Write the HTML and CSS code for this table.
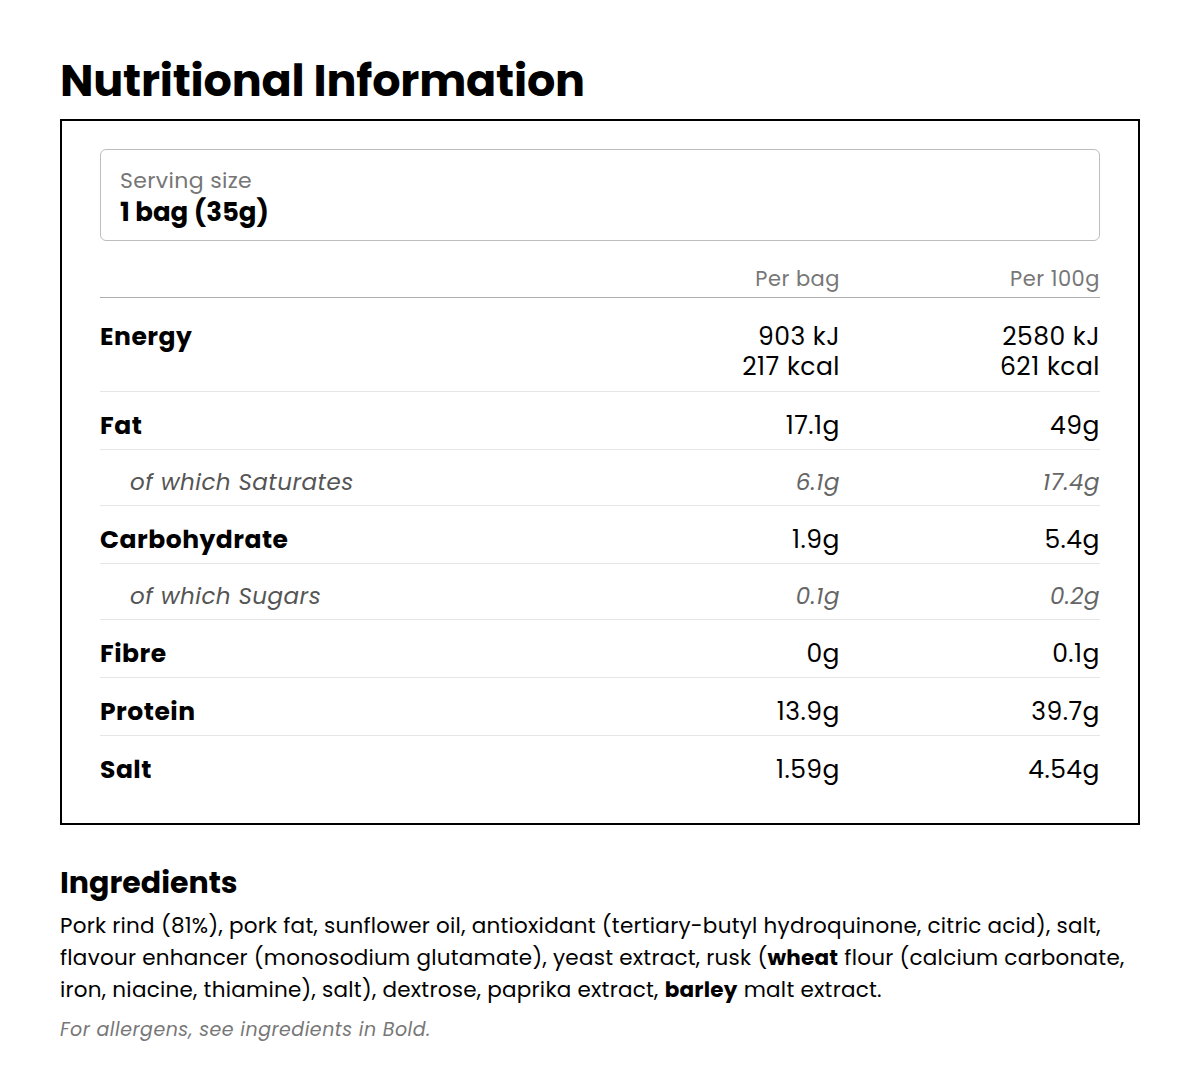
FILE: index.html
```html
<!DOCTYPE html>
<html lang="en">
<head>
<meta charset="utf-8">
<title>Nutritional Information</title>
<link rel="stylesheet" href="styles.css">
</head>
<body>
<main class="page">
  <h1 class="title">Nutritional Information</h1>
  <section class="panel">
    <div class="serving">
      <div class="serving-label">Serving size</div>
      <div class="serving-value">1 bag (35g)</div>
    </div>
    <div class="table">
      <div class="row head">
        <span class="label"></span>
        <span class="val">Per bag</span>
        <span class="val">Per 100g</span>
      </div>
      <div class="row first">
        <span class="label">Energy</span>
        <span class="val">903 kJ<br>217 kcal</span>
        <span class="val">2580 kJ<br>621 kcal</span>
      </div>
      <div class="row">
        <span class="label">Fat</span>
        <span class="val">17.1g</span>
        <span class="val">49g</span>
      </div>
      <div class="row sub">
        <span class="label">of which Saturates</span>
        <span class="val">6.1g</span>
        <span class="val">17.4g</span>
      </div>
      <div class="row">
        <span class="label">Carbohydrate</span>
        <span class="val">1.9g</span>
        <span class="val">5.4g</span>
      </div>
      <div class="row sub">
        <span class="label">of which Sugars</span>
        <span class="val">0.1g</span>
        <span class="val">0.2g</span>
      </div>
      <div class="row">
        <span class="label">Fibre</span>
        <span class="val">0g</span>
        <span class="val">0.1g</span>
      </div>
      <div class="row">
        <span class="label">Protein</span>
        <span class="val">13.9g</span>
        <span class="val">39.7g</span>
      </div>
      <div class="row last">
        <span class="label">Salt</span>
        <span class="val">1.59g</span>
        <span class="val">4.54g</span>
      </div>
    </div>
  </section>
  <section class="ingredients">
    <h2 class="ing-title">Ingredients</h2>
    <p class="ing-text">Pork rind (81%), pork fat, sunflower oil, antioxidant (tertiary-butyl hydroquinone, citric acid), salt, flavour enhancer (monosodium glutamate), yeast extract, rusk (<b>wheat</b> flour (calcium carbonate, iron, niacine, thiamine), salt), dextrose, paprika extract, <b>barley</b> malt extract.</p>
    <p class="ing-note">For allergens, see ingredients in Bold.</p>
  </section>
</main>
</body>
</html>
```

FILE: styles.css
```css
* { box-sizing: border-box; }
html, body { margin: 0; padding: 0; background: #fff; }
body {
  font-family: "Poppins", Inter, "Noto Sans", sans-serif;
  color: #000;
}
.page {
  padding: 53px 60px 40px;
}
.title {
  margin: 0 0 10px;
  font-size: 44.5px;
  line-height: 56px;
  font-weight: 700;
  letter-spacing: -0.2px;
}
.panel {
  border: 2px solid #000;
  padding: 28px 38px 30px;
}
.serving {
  border: 1px solid #bdbdbd;
  border-radius: 6px;
  padding: 16px 19px 11px;
}
.serving-label {
  font-size: 22px;
  line-height: 29px;
  letter-spacing: 0.35px;
  color: #767676;
}
.serving-value {
  font-size: 26px;
  line-height: 34px;
  font-weight: 700;
}
.table {
  margin-top: 24px;
}
.row {
  display: grid;
  grid-template-columns: 1fr 260px 260px;
  padding: 19px 0 8px;
  border-bottom: 1px solid #e6e6e6;
  font-size: 25px;
  line-height: 30px;
  letter-spacing: 0.5px;
}
.row .label { font-weight: 700; }
.row .val { text-align: right; }
.row.head {
  padding: 0 0 4px;
  border-bottom-color: #adadad;
  font-size: 21px;
  line-height: 28px;
  letter-spacing: 0.5px;
  color: #777;
}
.row.first { padding: 24px 0 9px; }
.row.sub {
  padding: 18px 0 9px;
  font-style: italic;
  font-size: 23px;
  line-height: 28px;
  letter-spacing: 0.5px;
  color: #666;
}
.row.sub .label {
  font-weight: 400;
  padding-left: 30px;
  color: #555;
}
.row.last { border-bottom: none; }
.ingredients {
  margin-top: 40px;
}
.ing-title {
  margin: 0;
  font-size: 30px;
  line-height: 36px;
  font-weight: 700;
}
.ing-text {
  margin: 9px 0 0;
  font-size: 21.5px;
  line-height: 32px;
  letter-spacing: 0.25px;
}
.ing-text b { font-weight: 700; }
.ing-note {
  margin: 11px 0 0;
  font-size: 19px;
  line-height: 26px;
  letter-spacing: 0.5px;
  font-style: italic;
  color: #777;
}
```
